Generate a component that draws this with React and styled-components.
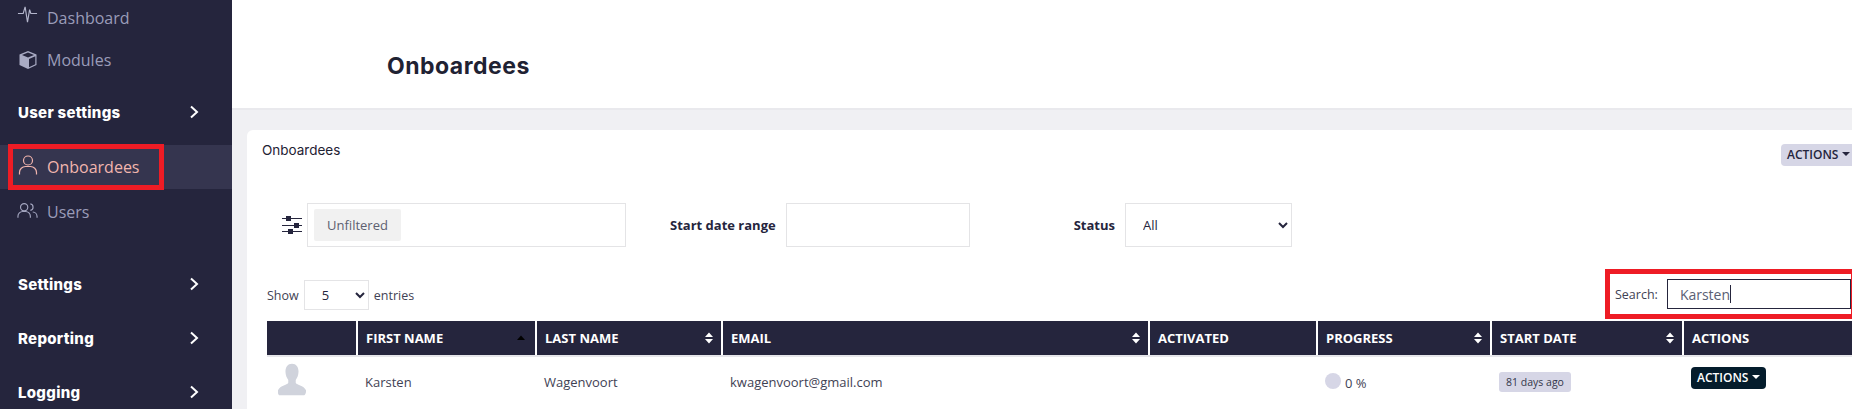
import React from "react";
import styled, { createGlobalStyle } from "styled-components";

const Global = createGlobalStyle`
  html, body {
    margin: 0;
    height: 100%;
    overflow: hidden;
    background: #f0f0f3;
    font-family: "Open Sans", sans-serif;
  }
  * { box-sizing: border-box; }
`;

const Page = styled.div`
  display: flex;
  width: 1852px;
  height: 409px;
  overflow: hidden;
`;

/* sidebar */
const Sidebar = styled.aside`
  flex: 0 0 232px;
  background: #25253d;
  margin-top: -3px;
  height: 412px;
  overflow: hidden;
`;
const NavItem = styled.div`
  display: flex;
  align-items: center;
  height: ${(p) => p.$height || 44}px;
  padding-left: 17px;
  gap: 9px;
  font-size: 16px;
  color: ${(p) => (p.$active ? "#f2b5ae" : "#9a9cb9")};
  background: ${(p) => (p.$active ? "#35354f" : "transparent")};
  position: relative;
`;
const IconSlot = styled.span`
  display: flex;
  justify-content: center;
  width: 21px;
  margin-bottom: ${(p) => p.$lift || 0}px;
`;
const NavHighlight = styled.span`
  position: absolute;
  left: 8px;
  top: -1px;
  width: 156px;
  height: 46px;
  border: 5px solid #ee1c25;
`;
const Section = styled.div`
  display: flex;
  align-items: center;
  justify-content: space-between;
  height: 54px;
  padding: 0 33px 0 18px;
  font-family: "Inter", sans-serif;
  font-size: 15px;
  font-weight: 800;
  letter-spacing: 0.3px;
  color: #fff;
  margin-top: ${(p) => p.$top || 0}px;
  margin-bottom: ${(p) => p.$bottom || 0}px;
`;

/* main */
const Main = styled.main`
  flex: 1;
  min-width: 0;
  overflow: hidden;
`;
const PageHeader = styled.header`
  display: flex;
  align-items: center;
  height: 110px;
  padding: 24px 0 0 155px;
  background: #fff;
  border-bottom: 2px solid #e9e9ed;
`;
const Title = styled.h1`
  margin: 0;
  font-family: "Inter", sans-serif;
  font-size: 23px;
  font-weight: 700;
  letter-spacing: 0.5px;
  color: #1f2233;
`;
const Content = styled.div`
  padding: 20px 0 0 15px;
`;
const Card = styled.section`
  width: 1625px;
  height: 300px;
  background: #fff;
  border-radius: 6px 0 0 0;
  padding: 14px 16px 0 15px;
`;
const CardHead = styled.div`
  display: flex;
  justify-content: space-between;
  align-items: flex-start;
  height: 59px;
`;
const CardTitle = styled.h2`
  margin: -1px 0 0;
  font-family: "Inter", sans-serif;
  font-size: 13.5px;
  font-weight: 400;
  line-height: 14px;
  color: #1f2233;
`;
const ActionsButton = styled.button`
  display: flex;
  align-items: center;
  justify-content: space-between;
  width: 75px;
  height: 22px;
  border: 0;
  border-radius: 4px;
  padding: 0 6px 1px;
  background: #d6d6e6;
  color: #25253d;
  font: 600 12px "Open Sans", sans-serif;
`;
const Caret = styled.span`
  width: 0;
  height: 0;
  border-left: 4px solid transparent;
  border-right: 4px solid transparent;
  border-top: 4px solid ${(p) => p.$color || "#25253d"};
  margin-bottom: 2px;
`;
const Filters = styled.div`
  display: flex;
  align-items: center;
  padding-left: 20px;
  height: 44px;
`;
const SlidersWrap = styled.span`
  display: flex;
  margin-right: 5px;
`;
const FilterBox = styled.div`
  display: flex;
  align-items: center;
  width: 319px;
  height: 44px;
  border: 1px solid #e4e4e6;
  padding-left: 6px;
`;
const Chip = styled.span`
  display: flex;
  align-items: center;
  justify-content: center;
  width: 87px;
  height: 32px;
  background: #f1f1f1;
  border-radius: 2px;
  font-size: 13px;
  color: #5d6070;
`;
const FieldLabel = styled.label`
  font-size: 13px;
  font-weight: 700;
  color: #25253d;
  margin-left: ${(p) => p.$left}px;
  margin-right: 10px;
`;
const DateInput = styled.input`
  width: 184px;
  height: 44px;
  border: 1px solid #e4e4e6;
  background: #fff;
`;
const StatusSelect = styled.select`
  width: 167px;
  height: 44px;
  border: 1px solid #e4e4e6;
  background: #fff;
  padding-left: 13px;
  font: 13px "Open Sans", sans-serif;
  color: #25253d;
`;
const TableControls = styled.div`
  display: flex;
  align-items: center;
  justify-content: space-between;
  height: 50px;
  margin-top: 22px;
  padding-left: 5px;
`;
const Show = styled.div`
  display: flex;
  align-items: center;
  gap: 5px;
  font-size: 12.5px;
  color: #3f4254;
  margin-top: 2px;
`;
const EntriesSelect = styled.select`
  width: 65px;
  height: 30px;
  border: 1px solid #e4e4e6;
  background: #fff;
  padding-left: 13px;
  font: 13px "Open Sans", sans-serif;
  color: #25253d;
`;
const SearchBox = styled.div`
  display: flex;
  align-items: center;
  width: 251px;
  height: 50px;
  border: 5px solid #ee1c25;
  padding-left: 5px;
  font-size: 12.5px;
  color: #3f4254;
`;
const SearchField = styled.div`
  display: flex;
  align-items: center;
  flex: 0 0 184px;
  height: 30px;
  margin-left: 9px;
  padding-left: 12px;
  border: 1px solid #25253d;
  font-size: 14px;
  color: #5a6074;
`;
const TextCaret = styled.span`
  width: 1px;
  height: 18px;
  background: #25253d;
`;

const Table = styled.table`
  width: 1589px;
  margin: 2px 0 0 5px;
  table-layout: fixed;
  border-collapse: collapse;
`;
const Th = styled.th`
  width: ${(p) => p.$w}px;
  height: 35px;
  padding: 0 0 1px 8px;
  background: #25253d;
  border-right: 2px solid #fff;
  border-bottom: 2px solid #e6e6ea;
  color: #fff;
  font-size: 13px;
  font-weight: 700;
  text-align: left;
  white-space: nowrap;
`;
const ThInner = styled.div`
  display: flex;
  align-items: center;
  justify-content: space-between;
  padding-right: ${(p) => p.$pad || 7}px;
`;
const Td = styled.td`
  height: 50px;
  padding: 0 0 0 8px;
  font-size: 13px;
  color: #3f4254;
  vertical-align: middle;
`;
const AvatarCell = styled(Td)`
  padding: 0 0 0 11px;
`;
const Progress = styled.div`
  display: flex;
  align-items: flex-end;
  gap: 4px;
`;
const Dot = styled.span`
  width: 16px;
  height: 16px;
  border-radius: 50%;
  background: #d6d6e6;
  margin-bottom: 1px;
`;
const Percent = styled.span`
  line-height: 14px;
`;
const Badge = styled.span`
  display: inline-flex;
  align-items: center;
  justify-content: center;
  width: 72px;
  height: 20px;
  border-radius: 3px;
  background: #d6d6e6;
  font-size: 10.5px;
  color: #33364a;
`;
const RowButton = styled.button`
  display: flex;
  align-items: center;
  gap: 4px;
  width: 75px;
  height: 22px;
  margin-bottom: 8px;
  border: 0;
  border-radius: 4px;
  padding: 0 6px;
  background: #041c2c;
  color: #fff;
  font: 600 12px "Open Sans", sans-serif;
`;

const PulseIcon = () => (
  <svg width="22" height="20" viewBox="0 0 22 20" fill="none" stroke="#b4b6cc" strokeWidth="1.2">
    <path d="M1 9.500h5.500l2-7 2.500 16 2.200-13 1.300 4h6.500" />
  </svg>
);
const CubeIcon = () => (
  <svg width="20" height="20" viewBox="0 0 20 20">
    <path d="M10 1 18.500 4.500v10.500L10 19 1.500 15V4.500Z" fill="#a9abc4" />
    <path d="M10 2.600 16 5l-6 2.500L4 5Z" fill="#25253d" />
    <path d="M11 9 17.300 6.300v8L11 17.200Z" fill="#25253d" />
  </svg>
);
const UserIcon = ({ color }) => (
  <svg width="20" height="22" viewBox="0 0 20 22" fill="none" stroke={color} strokeWidth="1.2">
    <circle cx="10" cy="6.500" r="4.500" />
    <path d="M1.500 20.500v-2a6 6 0 0 1 6-6h5a6 6 0 0 1 6 6v2" />
  </svg>
);
const UsersIcon = () => (
  <svg width="22" height="18" viewBox="0 0 22 18" fill="none" stroke="#a4a6c0" strokeWidth="1.2">
    <circle cx="7.500" cy="5" r="3.800" />
    <path d="M1 16v-1.500a5 5 0 0 1 5-5h3a5 5 0 0 1 5 5V16" />
    <path d="M14 1.600a3.400 3.400 0 0 1 0 6.700M16.500 10a4.800 4.800 0 0 1 4.500 4.800V16" />
  </svg>
);
const Chevron = () => (
  <svg width="10" height="14" viewBox="0 0 10 14" fill="none" stroke="#fff" strokeWidth="2">
    <path d="M2 1.500 8 7l-6 5.500" />
  </svg>
);
const SlidersIcon = () => (
  <svg width="20" height="18" viewBox="0 0 20 18" fill="#25253d">
    <path d="M0 2h20v1H0zM0 9h20v1H0zM0 15h20v1H0z" />
    <rect x="4" y="0" width="5" height="5" />
    <rect x="12" y="7" width="5" height="5" />
    <rect x="6" y="13" width="5" height="5" />
  </svg>
);
const SortIcon = ({ asc }) =>
  asc ? (
    <svg width="10" height="12" viewBox="0 0 10 12">
      <path d="M1 8 5 3.500 9 8Z" fill="#000" />
    </svg>
  ) : (
    <svg width="10" height="14" viewBox="0 0 10 14">
      <path d="M1 6 5 1.500 9 6ZM1 8 5 12.500 9 8Z" fill="#fff" />
    </svg>
  );
const AvatarIcon = () => (
  <svg width="28" height="33" viewBox="0 0 30 34" fill="#d0d3dc">
    <path d="M15 0c4.500 0 7 3.500 7 8.500 0 4-1.500 7-3 9v3c0 2 9 3 11 8 .5 2-1 5.500-2 5.500H2c-2 0-2.500-3.500-2-5.500 2-5 11-6 11-8v-3c-1.500-2-3-5-3-9C8 3.500 10.500 0 15 0Z" />
  </svg>
);

const columns = [
  { w: 90, label: "" },
  { w: 179, label: "FIRST NAME", sort: "asc", pad: 9 },
  { w: 186, label: "LAST NAME", sort: "both" },
  { w: 427, label: "EMAIL", sort: "both" },
  { w: 168, label: "ACTIVATED" },
  { w: 174, label: "PROGRESS", sort: "both" },
  { w: 192, label: "START DATE", sort: "both" },
  { w: 173, label: "ACTIONS" },
];

function App() {
  return (
    <Page>
      <Global />
      <Sidebar>
        <NavItem $height={42}>
          <IconSlot $lift={8}><PulseIcon /></IconSlot>
          Dashboard
        </NavItem>
        <NavItem $height={42}>
          <IconSlot><CubeIcon /></IconSlot>
          Modules
        </NavItem>
        <Section $top={4} $bottom={6}>
          User settings
          <Chevron />
        </Section>
        <NavItem $active>
          <IconSlot $lift={4}><UserIcon color="#f2b5ae" /></IconSlot>
          Onboardees
          <NavHighlight />
        </NavItem>
        <NavItem $height={46}>
          <IconSlot $lift={2}><UsersIcon /></IconSlot>
          Users
        </NavItem>
        <Section $top={22}>
          Settings
          <Chevron />
        </Section>
        <Section>
          Reporting
          <Chevron />
        </Section>
        <Section>
          Logging
          <Chevron />
        </Section>
      </Sidebar>
      <Main>
        <PageHeader>
          <Title>Onboardees</Title>
        </PageHeader>
        <Content>
          <Card>
            <CardHead>
              <CardTitle>Onboardees</CardTitle>
              <ActionsButton>
                ACTIONS
                <Caret />
              </ActionsButton>
            </CardHead>
            <Filters>
              <SlidersWrap><SlidersIcon /></SlidersWrap>
              <FilterBox>
                <Chip>Unfiltered</Chip>
              </FilterBox>
              <FieldLabel $left={44}>Start date range</FieldLabel>
              <DateInput />
              <FieldLabel $left={104}>Status</FieldLabel>
              <StatusSelect defaultValue="All">
                <option>All</option>
              </StatusSelect>
            </Filters>
            <TableControls>
              <Show>
                Show
                <EntriesSelect defaultValue="5">
                  <option>5</option>
                </EntriesSelect>
                entries
              </Show>
              <SearchBox>
                Search:
                <SearchField>
                  Karsten
                  <TextCaret />
                </SearchField>
              </SearchBox>
            </TableControls>
            <Table>
              <thead>
                <tr>
                  {columns.map((c) => (
                    <Th key={c.label} $w={c.w}>
                      <ThInner $pad={c.pad}>
                        {c.label}
                        {c.sort && <SortIcon asc={c.sort === "asc"} />}
                      </ThInner>
                    </Th>
                  ))}
                </tr>
              </thead>
              <tbody>
                <tr>
                  <AvatarCell><AvatarIcon /></AvatarCell>
                  <Td>Karsten</Td>
                  <Td>Wagenvoort</Td>
                  <Td>kwagenvoort@gmail.com</Td>
                  <Td />
                  <Td>
                    <Progress>
                      <Dot />
                      <Percent>0 %</Percent>
                    </Progress>
                  </Td>
                  <Td><Badge>81 days ago</Badge></Td>
                  <Td>
                    <RowButton>
                      ACTIONS
                      <Caret $color="#fff" />
                    </RowButton>
                  </Td>
                </tr>
              </tbody>
            </Table>
          </Card>
        </Content>
      </Main>
    </Page>
  );
}

export default App;
